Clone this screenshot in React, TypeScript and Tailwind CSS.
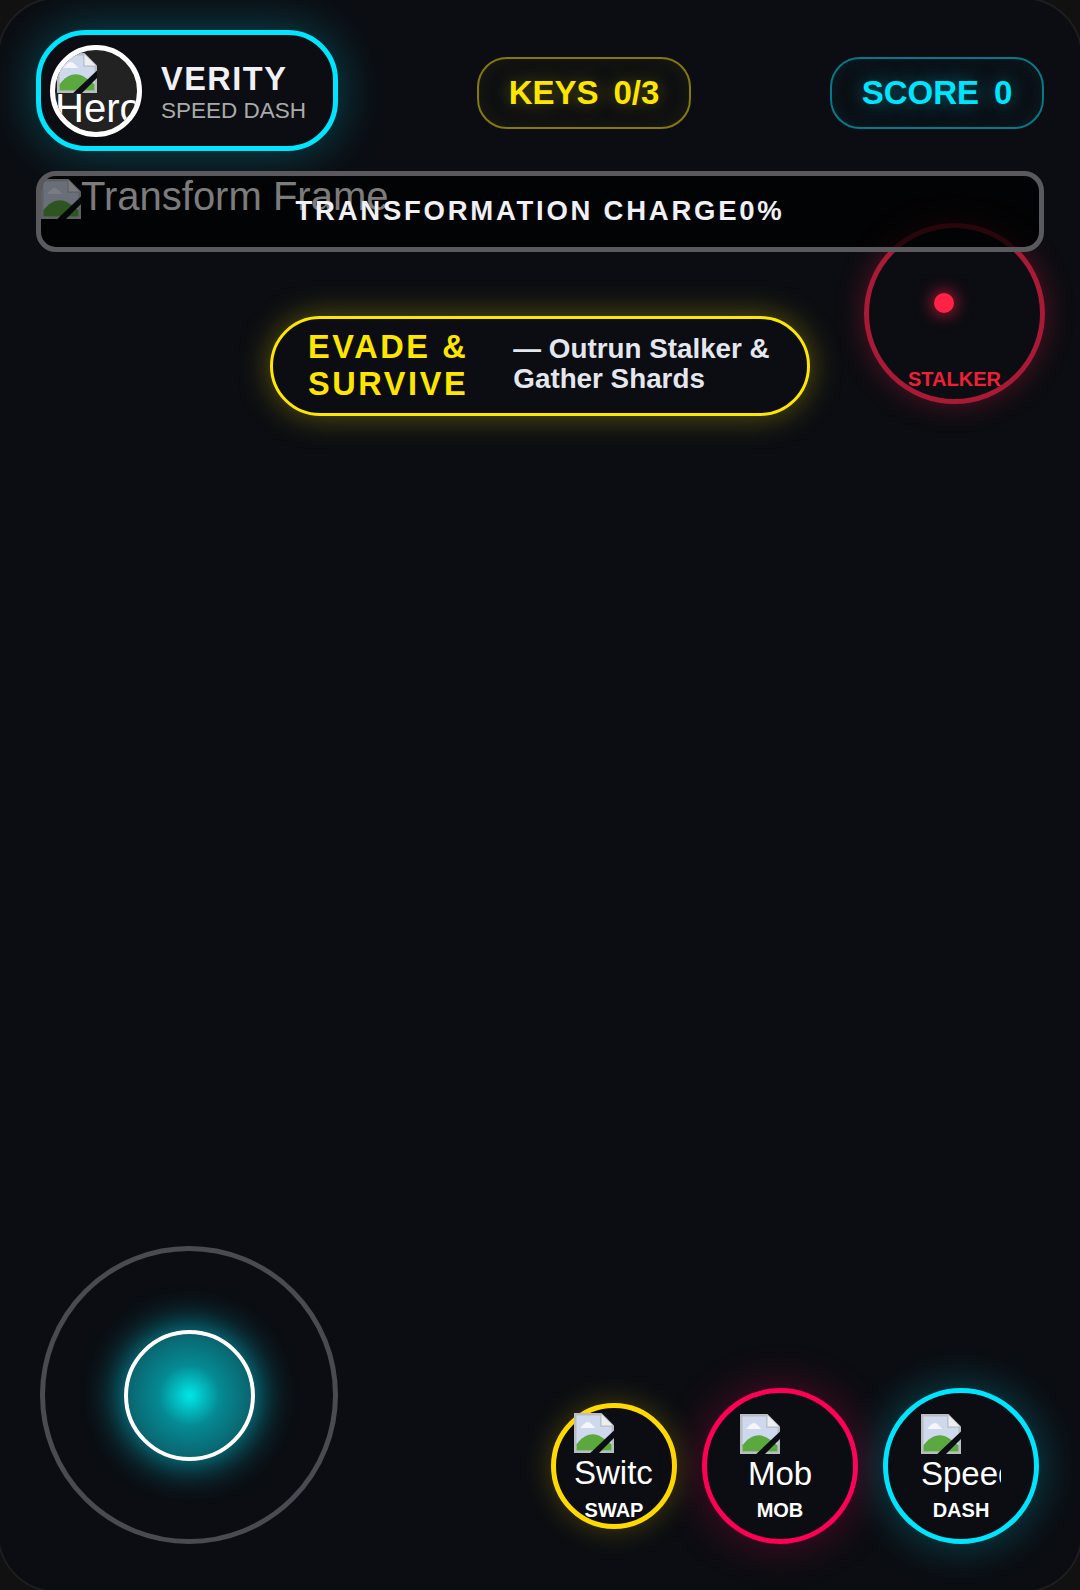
const FONT = "font-['Liberation_Sans',Arial,sans-serif]";

function BrokenImage({ className = '' }: { className?: string }) {
  return (
    <svg viewBox="0 0 16 16" className={`block h-[40px] w-[40px] ${className}`}>
      <path d="M0 0H11L16 5V16H0Z" fill="#b9bcc2" />
      <path d="M1 1H10.5V5.5H15V15H1Z" fill="#cfd9ee" />
      <path d="M2.5 6C3.5 4.8 4.5 3.6 5.5 3.6C6.5 3.6 7.5 5 8.5 6Z" fill="#f4f6fb" />
      <path d="M1 14.5V12.5C3 10 5 8.5 7.5 8.5C10 8.5 12.5 10.5 15 12.5V15H1Z" fill="#5aa83e" />
      <path d="M6.5 16L16 7V10L10 16Z" fill="#0b0d12" />
      <path d="M11 0.5L15.5 5H11Z" fill="#eceef2" />
    </svg>
  );
}

function Pill({ label, value, tone }: { label: string; value: string; tone: 'keys' | 'score' }) {
  const isKeys = tone === 'keys';
  return (
    <div
      className={`mt-[4px] flex h-[72px] w-[214px] items-center justify-center gap-[15px] rounded-[30px] border-[2.5px] text-[33px] font-bold ${
        isKeys
          ? 'border-[#ffe60080] text-[#ffe600] shadow-[inset_0_0_25px_#ffe60014] [text-shadow:0_0_20px_#ffe60066]'
          : 'border-[#00e5ff80] text-[#00e5ff] shadow-[inset_0_0_25px_#00e5ff14] [text-shadow:0_0_20px_#00e5ff80]'
      }`}
    >
      <span>{label}</span>
      <span>{value}</span>
    </div>
  );
}

function ActionButton({
  alt,
  label,
  sizeClass,
  labelClass,
  toneClass,
}: {
  alt: string;
  label: string;
  sizeClass: string;
  labelClass: string;
  toneClass: string;
}) {
  return (
    <button className={`relative flex shrink-0 justify-center rounded-full border-[5px] bg-[#0b0d12] ${sizeClass} ${toneClass}`}>
      <div className="mt-[5px] h-[80px] w-[80px] overflow-hidden">
        <BrokenImage />
        <div className="whitespace-nowrap text-center text-[33px] leading-[40px] text-white">{alt}</div>
      </div>
      <span className={`absolute left-0 right-0 text-center text-[20px] font-bold leading-[23px] text-white ${labelClass}`}>
        {label}
      </span>
    </button>
  );
}

export default function App() {
  return (
    <div className={`h-[1590px] w-[1080px] overflow-hidden bg-[#111111] ${FONT}`}>
      {/* frame is larger than the page so its outline only shows at the corners */}
      <div className="relative -ml-[3px] -mt-[3px] flex h-[1596px] w-[1086px] flex-col overflow-hidden rounded-[60px] bg-[#0b0d12] pb-[49px] pl-[39px] pr-[39px] pt-[33px] shadow-[inset_0_0_0_2px_#1e1e1e]">
        {/* Stalker radar, sits under the charge bar */}
        <div className="absolute left-[867px] top-[226px] h-[181px] w-[181px] rounded-full border-[5px] border-[#ff224ca6] shadow-[0_0_30px_#ff224c4d]">
          <div className="absolute left-[65px] top-[65px] h-[20px] w-[20px] rounded-full bg-[#ff2244] shadow-[0_0_18px_#ff2244]" />
          <span className="absolute bottom-[8px] left-0 right-0 text-center text-[20px] font-bold leading-[23px] text-[#ee2038]">
            STALKER
          </span>
        </div>

        {/* Top HUD */}
        <div className="relative flex items-center justify-between">
          <div className="flex h-[121px] w-[302px] items-center gap-[19px] rounded-[50px] border-[5px] border-[#00e5ff] bg-[#0b0d12] pl-[9px] shadow-[0_0_50px_#00e5ff4d]">
            <div className="h-[92px] w-[92px] shrink-0 overflow-hidden rounded-full border-[5px] border-white bg-[#222222]">
              <BrokenImage className="ml-[2px] mt-[3px]" />
              <div className="-mt-[4px] whitespace-nowrap text-[40px] leading-[38px] text-white">Hero</div>
            </div>
            <div className="pt-[4px]">
              <div className="text-[32.5px] font-bold leading-[37px] tracking-[1.5px] text-[#f0f0f5]">VERITY</div>
              <div className="text-[22.5px] leading-[26px] text-[#aaaaaa]">SPEED DASH</div>
            </div>
          </div>
          <Pill label="KEYS" value="0/3" tone="keys" />
          <Pill label="SCORE" value="0" tone="score" />
        </div>

        {/* Transformation charge */}
        <div className="relative mt-[20px] flex h-[81px] items-center justify-center overflow-hidden rounded-[20px] border-[5px] border-[#5a5a5e] bg-[#000000c4]">
          <div className="absolute left-0 top-0 flex items-start text-[40px] leading-[40px] text-[#7c7c7c]">
            <BrokenImage className="mt-[3px] opacity-50" />
            <span className="whitespace-nowrap">Transform Frame</span>
          </div>
          <div className="relative -mt-[2px] text-[27.5px] font-bold tracking-[2.75px] text-[#f0f0f5]">
            TRANSFORMATION CHARGE0%
          </div>
        </div>

        {/* Objective banner */}
        <div className="relative mx-auto mt-[64px] flex h-[100px] w-[540px] items-center gap-[45px] rounded-[50px] border-[3px] border-[#ffe600] bg-[#0b0d12] px-[35px] shadow-[0_0_32px_#ffe60059]">
          <div className="shrink-0 text-[32.5px] font-bold leading-[37.5px] tracking-[2.6px] text-[#ffe600]">
            EVADE &amp;
            <br />
            SURVIVE
          </div>
          <div className="mb-[4px] text-[27.8px] font-bold leading-[30.5px] text-[#e5e7ef]">— Outrun Stalker &amp; Gather Shards</div>
        </div>

        {/* Controls */}
        <div className="mt-auto flex items-end justify-between pl-[4px] pr-[5px]">
          <div className="flex h-[298px] w-[298px] items-center justify-center rounded-full border-[5px] border-[#4a4a52]">
            <div className="h-[131px] w-[131px] rounded-full border-[4px] border-white bg-[radial-gradient(circle,#00e8e8_0%,#058a94_35%,#0a6670_70%,#0a5a64_100%)] shadow-[0_0_40px_#00e5ffcc]" />
          </div>
          <div className="flex items-center gap-[25px]">
            <ActionButton alt="Switch" label="SWAP" sizeClass="h-[126px] w-[126px]" labelClass="bottom-[2px]" toneClass="border-[#ffd900] shadow-[0_0_30px_#ffd90040]" />
            <ActionButton alt="Mob" label="MOB" sizeClass="h-[156px] w-[156px] pt-[16px]" labelClass="bottom-[17px]" toneClass="border-[#ff0055] shadow-[0_0_45px_#ff00554d]" />
            <ActionButton alt="Speed" label="DASH" sizeClass="h-[156px] w-[156px] pt-[16px]" labelClass="bottom-[17px]" toneClass="border-[#00e5ff] shadow-[0_0_45px_#00e5ff4d]" />
          </div>
        </div>
      </div>
    </div>
  );
}
